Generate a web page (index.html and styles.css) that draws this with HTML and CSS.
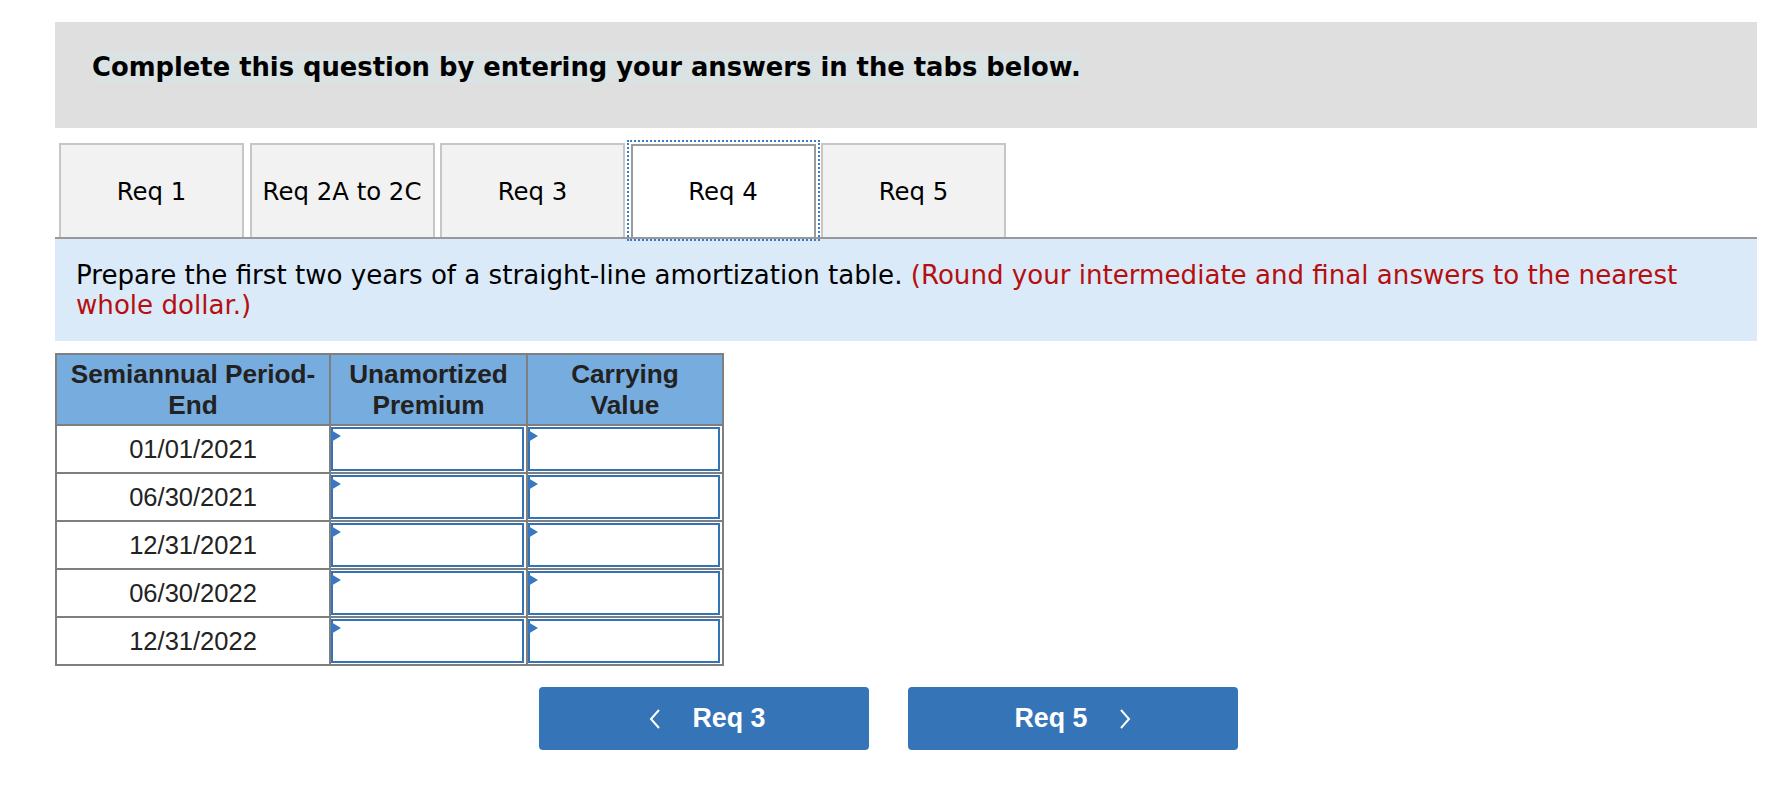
FILE: index.html
```html
<!DOCTYPE html>
<html lang="en">
<head>
<meta charset="utf-8">
<title>Req 4</title>
<link rel="stylesheet" href="styles.css">
</head>
<body>
<div class="page">
  <div class="banner"><span class="banner-text">Complete this question by entering your answers in the tabs below.</span></div>

  <div class="tabs">
    <div class="tab">Req 1</div>
    <div class="tab">Req 2A to 2C</div>
    <div class="tab">Req 3</div>
    <div class="tab tab-active">Req 4</div>
    <div class="tab">Req 5</div>
  </div>

  <div class="instructions">
    <p class="instr-text">Prepare the first two years of a straight-line amortization table. <span class="instr-red">(Round your intermediate and final answers to the nearest</span> <span class="instr-red">whole dollar.)</span></p>
  </div>

  <table class="amort">
    <thead>
      <tr>
        <th class="col-date">Semiannual Period-<br>End</th>
        <th class="col-prem">Unamortized<br>Premium</th>
        <th class="col-carry">Carrying<br>Value</th>
      </tr>
    </thead>
    <tbody>
      <tr>
        <td class="date-cell">01/01/2021</td>
        <td class="input-cell"><div class="input-box"><span class="marker"></span></div></td>
        <td class="input-cell"><div class="input-box"><span class="marker"></span></div></td>
      </tr>
      <tr>
        <td class="date-cell">06/30/2021</td>
        <td class="input-cell"><div class="input-box"><span class="marker"></span></div></td>
        <td class="input-cell"><div class="input-box"><span class="marker"></span></div></td>
      </tr>
      <tr>
        <td class="date-cell">12/31/2021</td>
        <td class="input-cell"><div class="input-box"><span class="marker"></span></div></td>
        <td class="input-cell"><div class="input-box"><span class="marker"></span></div></td>
      </tr>
      <tr>
        <td class="date-cell">06/30/2022</td>
        <td class="input-cell"><div class="input-box"><span class="marker"></span></div></td>
        <td class="input-cell"><div class="input-box"><span class="marker"></span></div></td>
      </tr>
      <tr>
        <td class="date-cell">12/31/2022</td>
        <td class="input-cell"><div class="input-box"><span class="marker"></span></div></td>
        <td class="input-cell"><div class="input-box"><span class="marker"></span></div></td>
      </tr>
    </tbody>
  </table>

  <div class="nav">
    <button class="nav-btn nav-prev" type="button">
      <svg class="chev" width="12" height="20" viewBox="0 0 12 20"><polyline points="10,1 2,10 10,19" fill="none" stroke="#fff" stroke-width="2"/></svg>
      <span class="nav-label">Req 3</span>
    </button>
    <button class="nav-btn" type="button">
      <span class="nav-label">Req 5</span>
      <svg class="chev" width="12" height="20" viewBox="0 0 12 20"><polyline points="2,1 10,10 2,19" fill="none" stroke="#fff" stroke-width="2"/></svg>
    </button>
  </div>
</div>
</body>
</html>
```

FILE: styles.css
```css
html, body {
  margin: 0;
  padding: 0;
  background: #ffffff;
}

.page {
  padding: 22px 0 0 55px;
  width: 1702px;
}

.banner {
  box-sizing: border-box;
  height: 106px;
  background: #dfdfdf;
  padding: 30px 0 0 37px;
}

.banner-text {
  font-family: "DejaVu Sans", Verdana, sans-serif;
  font-weight: bold;
  font-size: 25.8px;
  line-height: 31px;
  color: #000;
  background: #dae2e4;
  display: inline-block;
}

.tabs {
  display: flex;
  gap: 5.5px;
  margin-top: 15px;
  padding-left: 4px;
  border-bottom: 2px solid #999999;
}

.tab {
  box-sizing: border-box;
  width: 185px;
  height: 94px;
  background: #f2f2f2;
  border: 2px solid #c6c6c6;
  border-bottom: none;
  display: flex;
  align-items: center;
  justify-content: center;
  font-family: "DejaVu Sans", Verdana, sans-serif;
  font-size: 24.4px;
  color: #000;
}

.tab-active {
  background: #ffffff;
  border-color: #9a9a9a;
  outline: 2px dotted #3b7cc9;
  outline-offset: 2px;
  position: relative;
  height: 93px;
  margin-top: 1px;
}

.instructions {
  box-sizing: border-box;
  height: 102px;
  background: #dbeaf8;
  padding: 21px 21px 0 21px;
}

.instr-text {
  margin: 0;
  font-family: "DejaVu Sans", Verdana, sans-serif;
  font-size: 26.1px;
  line-height: 30px;
  color: #000;
}

.instr-red {
  color: #b50f0f;
}

.amort {
  margin-top: 12px;
  border-collapse: collapse;
  font-family: "Liberation Sans", Arial, sans-serif;
  color: #222222;
}

.amort th,
.amort td {
  border: 2px solid #7f7f7f;
}

.amort th {
  background: #77acdf;
  font-weight: bold;
  font-size: 26.2px;
  line-height: 31px;
  height: 71px;
  padding: 0 4px;
  text-align: center;
  box-sizing: border-box;
}

.col-date { width: 274px; }
.col-prem { width: 197px; }
.col-carry { width: 196px; }

.amort td {
  height: 46px;
  padding: 0;
  box-sizing: border-box;
}

.date-cell {
  background: #ffffff;
  text-align: center;
  font-size: 25.5px;
}

.input-cell {
  padding: 1px 2px 1px 0 !important;
  background: #ffffff;
}

.input-box {
  position: relative;
  box-sizing: border-box;
  height: 44px;
  border: 2px solid #3672b6;
  background: #ffffff;
}

.marker {
  position: absolute;
  left: -2px;
  top: 1px;
  width: 0;
  height: 0;
  border-top: 6.5px solid transparent;
  border-bottom: 6.5px solid transparent;
  border-left: 10px solid #3a78c3;
}

.nav {
  display: flex;
  gap: 39px;
  margin-top: 21px;
  margin-left: 484px;
}

.nav-btn {
  box-sizing: border-box;
  width: 330px;
  height: 63px;
  background: #3674b8;
  border: none;
  border-radius: 4px;
  display: flex;
  align-items: center;
  justify-content: center;
  gap: 32px;
  padding: 0;
  color: #ffffff;
  font-family: "Liberation Sans", Arial, sans-serif;
  font-weight: bold;
  font-size: 26.8px;
}

.nav-prev {
  padding-left: 6px;
}

.chev {
  display: block;
}
```
